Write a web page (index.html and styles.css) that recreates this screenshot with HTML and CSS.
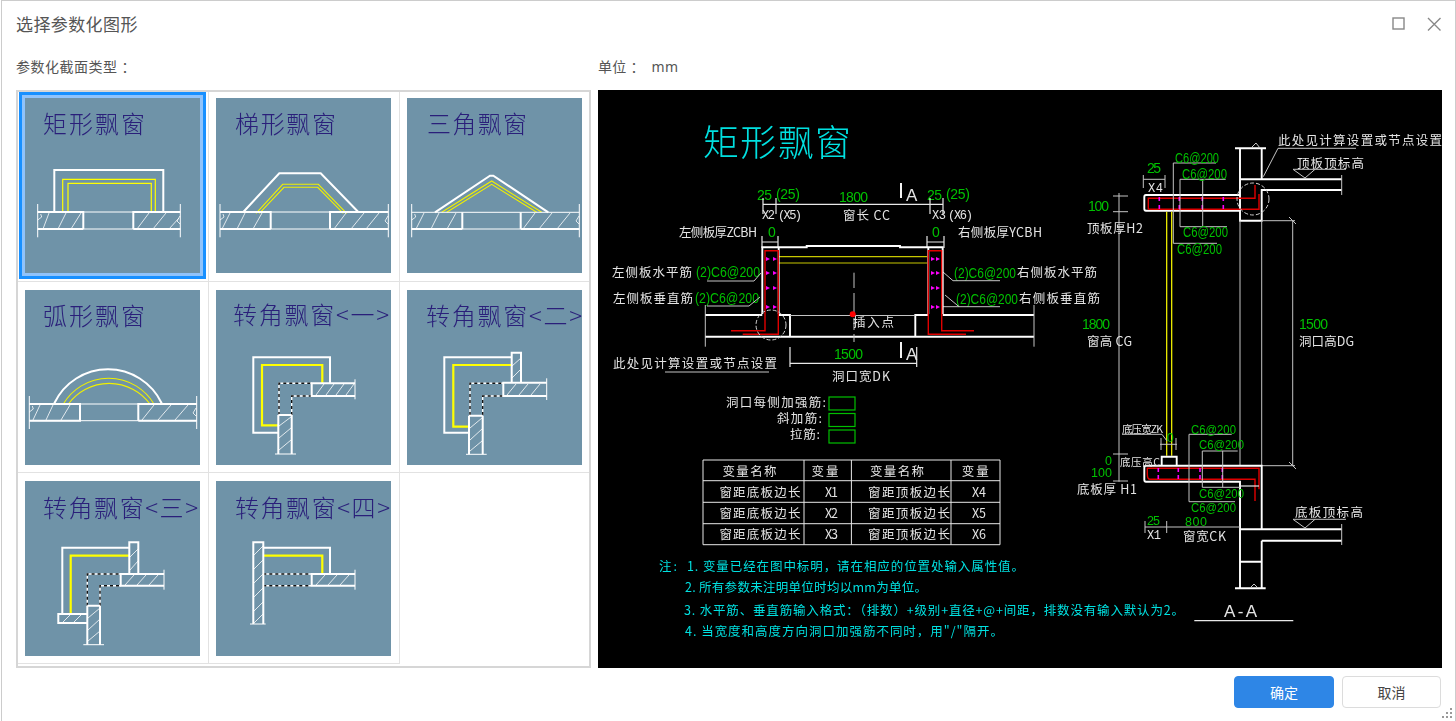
FILE: index.html
```html
<!DOCTYPE html>
<html lang="zh-CN">
<head>
<meta charset="utf-8">
<title>选择参数化图形</title>
<link rel="stylesheet" href="styles.css">
</head>
<body>
<div class="window">
  <header class="titlebar">
    <h1 class="title">选择参数化图形</h1>
    <div class="winbtns">
      <svg class="winicon" viewBox="0 0 14 14"><rect x="1" y="1" width="11" height="11"/></svg>
      <svg class="winicon" viewBox="0 0 14 14"><path d="M1 1L13.500 13.500M13.500 1L1 13.500"/></svg>
    </div>
  </header>
  <div class="labels">
    <div class="label-left">参数化截面类型<span class="colon">：</span></div>
    <div class="label-right">单位<span class="colon">：</span><span class="unit">mm</span></div>
  </div>
  <div class="panes">
    <div class="gallery">
      <div class="cell first">
        <div class="thumb selected"><svg viewBox="0 0 175 175">
          <text class="tt" x="18" y="35" textLength="102">矩形飘窗</text>
          <path class="w" d="M29.300 114V72H138.300V114"/>
          <path class="yl" d="M37.700 114V81.300H130.300V114M43 114V85.300H126.300V114"/>
          <path class="t" d="M12.700 114H155.300M12.700 131H155.300M12.700 106V139.300M155.300 106V139.300"/>
          <path class="w" d="M12.700 114H58.300V131M108.300 131V114H155.300M12.700 131H58.300M108.300 131H155.300"/>
          <path class="h" d="M12.700 122l4-3-1-3M18 131l6-16M33 131l8-16M46 131l10-16M112 131l12-16M128 131l13-16M144 131l10-11M155 118l-3 5 3 3"/>
        </svg></div>
      </div>
      <div class="cell">
        <div class="thumb"><svg viewBox="0 0 175 175">
          <text class="tt" x="19" y="35" textLength="101">梯形飘窗</text>
          <path class="w" d="M27.300 114L63.300 75.300H104.700L142.300 114"/>
          <path class="yt" d="M40 115.300L66.700 86.300H102.300L130.700 115.300M43.300 115.300L68 89.300H101.700L127.300 115.300"/>
          <path class="t" d="M4 114H172.300M4 131H172.300M4 106V139.300M172.300 106V139.300"/>
          <path class="w" d="M4 114H54.700V131M114 131V114H172.300M4 131H54.700M114 131H172.300"/>
          <path class="h" d="M4 122l4-3-1-3M6 131l8-16M21 131l8-16M37 131l9-16M118 131l12-16M135 131l13-16M150 131l13-16M172 118l-3 5 3 3"/>
        </svg></div>
      </div>
      <div class="cell last">
        <div class="thumb"><svg viewBox="0 0 175 175">
          <text class="tt" x="20" y="35" textLength="100">三角飘窗</text>
          <path class="w" d="M28 114.300L83 77.700H86.300L141.300 114.300"/>
          <path class="yt" d="M34.700 114.300L84.700 83L134.700 114.300M39.700 114.300L84.700 86.300L129.700 114.300"/>
          <path class="t" d="M4.700 114.300H172.300M4.700 131H172.300M4.700 106V139.300M172.300 106V139.300"/>
          <path class="w" d="M55.300 114.300V131M113.700 114.300V131M4.700 131H55.300M113.700 131H172.300"/>
          <path class="h" d="M4.700 122l4-3-1-3M9 131l8-16M24 131l8-16M40 131l9-16M116 131l12-16M132 131l13-16M150 131l13-16M172 118l-3 5 3 3"/>
        </svg></div>
      </div>
      <div class="cell">
        <div class="thumb"><svg viewBox="0 0 175 175">
          <text class="tt" x="18" y="35" textLength="102">弧形飘窗</text>
          <path class="w" d="M29.300 113.300A59.400 59.400 0 0 1 136.700 113.300"/>
          <path class="yt" d="M38.300 114A52.800 52.800 0 0 1 129 114M43.300 114A50.700 50.700 0 0 1 125 114"/>
          <path class="t" d="M4.300 114H171.700M4.300 130.700H171.700M4.300 106V139M171.700 106V139"/>
          <path class="w" d="M4.300 114H55V130.700H4.300M113.300 130.700V114H171.700M113.300 130.700H171.700"/>
          <path class="h" d="M4.300 122l4-3-1-3M8 130l7-15M21 130l7-15M36 130l9-15M117 130l12-15M133 130l13-15M150 130l13-15M171 118l-3 5 3 3"/>
        </svg></div>
      </div>
      <div class="cell">
        <div class="thumb"><svg viewBox="0 0 175 175">
          <text class="tt" x="17" y="34" textLength="156">转角飘窗&lt;一&gt;</text>
          <path class="w" d="M62.300 142.700H37.300V67.300H114V93.300"/>
          <path class="yb" d="M62.300 135.300H46V75H106.300V93.300"/>
          <path class="dw" d="M63 125V93.300H95.700M75.700 125V106H95.700"/>
          <path class="d" d="M63 125V93.300H95.700M75.700 125V106H95.700"/>
          <path class="w" d="M139 93.300H95.700V106H139M62.300 125H75.700M62.300 125V164M75.700 125V164"/>
          <path class="t" d="M139 89.300V109.300M59 164H80"/>
          <path class="h" d="M100 105l8-11M110 105l8-11M120 105l8-11M130 105l8-11M63 136l12-9M63 148l12-10M63 160l12-10"/>
        </svg></div>
      </div>
      <div class="cell last">
        <div class="thumb"><svg viewBox="0 0 175 175">
          <text class="tt" x="19" y="35" textLength="156">转角飘窗&lt;二&gt;</text>
          <path class="w" d="M61.300 142.700H37.300V67.300H104.700"/>
          <path class="yb" d="M62 136.700H46.300V75H104.700"/>
          <path class="dw" d="M63 125V93.300H96.300M75.700 125V106H96.300"/>
          <path class="d" d="M63 125V93.300H96.300M75.700 125V106H96.300"/>
          <path class="w" d="M104.700 92.700V62.700H114V92.700M139.700 92.700H96.300V106H139.700M62 125.700H75.700M62 125.700V164.300M75.700 125.700V164.300"/>
          <path class="t" d="M139.700 88.300V110M59 164.300H79.700"/>
          <path class="h" d="M105 76l9-8M105 88l9-9M100 105l9-11M112 105l9-11M124 105l9-11M63 138l12-10M63 150l12-11M63 161l12-10"/>
        </svg></div>
      </div>
      <div class="cell">
        <div class="thumb"><svg viewBox="0 0 175 175">
          <text class="tt" x="18" y="36" textLength="155">转角飘窗&lt;三&gt;</text>
          <path class="w" d="M37.300 133V66.700H104.300"/>
          <path class="yb" d="M45.700 133V74.700H104.300"/>
          <path class="dw" d="M62.300 124.700V93H95.700M75 124.700V104.700H95.700"/>
          <path class="d" d="M62.300 124.700V93H95.700M75 124.700V104.700H95.700"/>
          <path class="w" d="M104.300 92V61.300H113.300V92M139 93H95.700V104.700H139M62.300 124.700H75M62.300 124.700V163.700M75 124.700V163.700M62.300 133H33.300V142H62.300"/>
          <path class="t" d="M139 88.700V108.700M58.300 163.700H79"/>
          <path class="h" d="M105 76l8-8M105 89l8-9M100 104l9-10M112 104l9-10M124 104l9-10M38 141l7-7M49 141l7-7M63 137l12-10M63 149l12-11M63 160l12-10"/>
        </svg></div>
      </div>
      <div class="cell">
        <div class="thumb"><svg viewBox="0 0 175 175">
          <text class="tt" x="19" y="36" textLength="155">转角飘窗&lt;四&gt;</text>
          <path class="w" d="M47.300 66.700H114V92"/>
          <path class="yb" d="M47.300 74.700H106.300V92"/>
          <path class="dw" d="M47.300 93H95.700M47.300 104.700H95.700"/>
          <path class="d" d="M47.300 93H95.700M47.300 104.700H95.700"/>
          <path class="w" d="M37.300 143V61.300H47.300V143M139 93H95.700V104.700H139"/>
          <path class="t" d="M139 88.700V108.700M34 143H49.700"/>
          <path class="h" d="M38 74l9-9M38 88l9-9M38 102l9-9M38 116l9-9M38 130l9-9M38 142l9-9M100 104l9-10M112 104l9-10M124 104l9-10"/>
        </svg></div>
      </div>
      <div class="cell empty"></div>
    </div>
    <div class="drawing">
      <svg viewBox="598 90 844 578">
        <text class="cy big" x="703" y="156" textLength="148">矩形飘窗</text>

        <!-- plan: dimensions -->
        <text class="gr" x="757" y="200" textLength="15">25</text>
        <text class="gr" x="776" y="199" textLength="24">(25)</text>
        <text class="gr" x="839" y="202" textLength="29">1800</text>
        <text class="gr" x="927" y="200" textLength="15">25</text>
        <text class="gr" x="946" y="199" textLength="24">(25)</text>
        <text class="wt sm" x="762" y="219" textLength="13">X2</text>
        <text class="wt sm" x="778" y="219" textLength="24">(X5)</text>
        <text class="wt" x="843" y="220" textLength="47">窗长 CC</text>
        <text class="wt sm" x="932" y="219" textLength="14">X3</text>
        <text class="wt sm" x="948" y="219" textLength="25">(X6)</text>
        <text class="wt" x="679" y="237" textLength="78">左侧板厚ZCBH</text>
        <text class="gr" x="768" y="237" textLength="7">0</text>
        <text class="gr" x="932" y="237" textLength="7">0</text>
        <text class="wt" x="958" y="237" textLength="84">右侧板厚YCBH</text>
        <path class="l1" d="M763 204.300H943M763 198V214M776 198V214M930 198V214M943 198V214M762 242H778M762 236V248M778 236V248M927 242H944M927 236V248M944 236V248"/>
        <path class="l2" d="M901 183V198M901 342V358"/>
        <text class="wt cap" x="906" y="201" textLength="12">A</text>
        <text class="wt cap" x="906" y="360" textLength="12">A</text>

        <!-- plan: labels -->
        <text class="wt" x="612" y="277" textLength="80">左侧板水平筋</text>
        <text class="gr" x="696" y="277" textLength="64" lengthAdjust="spacingAndGlyphs">(2)C6@200</text>
        <text class="wt" x="613" y="303" textLength="80">左侧板垂直筋</text>
        <text class="gr" x="695" y="303" textLength="64" lengthAdjust="spacingAndGlyphs">(2)C6@200</text>
        <text class="gr" x="954" y="278" textLength="62" lengthAdjust="spacingAndGlyphs">(2)C6@200</text>
        <text class="wt" x="1017" y="277" textLength="80">右侧板水平筋</text>
        <text class="gr" x="956" y="304" textLength="62" lengthAdjust="spacingAndGlyphs">(2)C6@200</text>
        <text class="wt" x="1019" y="303" textLength="81">右侧板垂直筋</text>
        <path class="l0" d="M707 281H754L761 273M707 306H749L760 297M1000 280.700H953L943 272M1000 306.700H941M959 306.700L945 295"/>

        <!-- plan: walls -->
        <path class="y0" d="M779 256.700H927M779 263H927"/>
        <path class="l2" d="M762.300 314V247.300H806.700V246H900V247.300H942.700V314M778.700 247.300V314M928.300 247.300V314"/>
        <path class="l2" d="M705 315H762.300M778.700 315H790V336.700M915.300 336.700V315H928.300M942.700 315H1034M705 336.700H1034"/>
        <path class="l0" d="M790 315.500H915.300M705.300 305V346.700M1034 305V346.700M854 272.700V288M854 293V312M854 318V330M854 334V342"/>
        <path class="rd" d="M731 330.700H765V250.700H778.300V334.300H742.700M974 330.700H941.700V250.700H928.300V334.300H966"/>
        <path class="mg" d="M766 257l4 2-4 2zM773 257l4 2-4 2zM766 271l4 2-4 2zM773 271l4 2-4 2zM766 286l4 2-4 2zM773 286l4 2-4 2zM766 305l4 2-4 2zM773 305l4 2-4 2zM931 257l4 2-4 2zM936 257l4 2-4 2zM931 271l4 2-4 2zM936 271l4 2-4 2zM931 286l4 2-4 2zM936 286l4 2-4 2zM931 305l4 2-4 2zM936 305l4 2-4 2z"/>
        <circle class="dash" cx="771" cy="325" r="15"/>
        <circle class="dot" cx="852.700" cy="314.300" r="3"/>
        <text class="wt" x="853" y="327" textLength="41">插入点</text>
        <text class="gr" x="834" y="359" textLength="29">1500</text>
        <path class="l1" d="M790 363.300H916.700M790 347V367M916.700 347V367"/>
        <text class="wt" x="832" y="381" textLength="58">洞口宽DK</text>
        <text class="wt" x="613" y="368" textLength="164">此处见计算设置或节点设置</text>
        <path class="l0" d="M665 372H769"/>

        <!-- rebar legend -->
        <text class="wt" x="726" y="407" textLength="100">洞口每侧加强筋:</text>
        <text class="wt" x="777" y="423" textLength="45">斜加筋:</text>
        <text class="wt" x="790" y="439" textLength="30">拉筋:</text>
        <rect class="box" x="829" y="397" width="26" height="13"/>
        <rect class="box" x="829" y="413.500" width="26" height="13"/>
        <rect class="box" x="829" y="430" width="26" height="13"/>

        <!-- table -->
        <path class="tb" d="M703 460H1000M703 480.700H1000M703 502.300H1000M703 523.700H1000M703 544.700H1000M703 460V544.700M804 460V544.700M851.400 460V544.700M951 460V544.700M1000 460V544.700"/>
        <text class="wt" x="722.500" y="476" textLength="54">变量名称</text>
        <text class="wt" x="811.500" y="476" textLength="27">变量</text>
        <text class="wt" x="870" y="476" textLength="54">变量名称</text>
        <text class="wt" x="961.700" y="476" textLength="27">变量</text>
        <text class="wt" x="719.400" y="497" textLength="81">窗距底板边长</text>
        <text class="wt" x="825" y="497" textLength="13">X1</text>
        <text class="wt" x="868" y="497" textLength="82">窗距顶板边长</text>
        <text class="wt" x="972" y="497" textLength="14">X4</text>
        <text class="wt" x="719.400" y="518" textLength="81">窗距底板边长</text>
        <text class="wt" x="825" y="518" textLength="13">X2</text>
        <text class="wt" x="868" y="518" textLength="82">窗距顶板边长</text>
        <text class="wt" x="972" y="518" textLength="14">X5</text>
        <text class="wt" x="719.400" y="539" textLength="81">窗距底板边长</text>
        <text class="wt" x="825" y="539" textLength="13">X3</text>
        <text class="wt" x="868" y="539" textLength="82">窗距顶板边长</text>
        <text class="wt" x="972" y="539" textLength="14">X6</text>

        <!-- notes -->
        <text class="cy" x="659" y="571" textLength="18">注:</text>
        <text class="cy" x="687" y="571" textLength="337">1. 变量已经在图中标明，请在相应的位置处输入属性值。</text>
        <text class="cy" x="685" y="592" textLength="242">2. 所有参数未注明单位时均以mm为单位。</text>
        <text class="cy" x="684" y="615" textLength="500">3. 水平筋、垂直筋输入格式：（排数）+级别+直径+@+间距，排数没有输入默认为2。</text>
        <text class="cy" x="685" y="636" textLength="318">4. 当宽度和高度方向洞口加强筋不同时，用"/"隔开。</text>

        <!-- section: top -->
        <text class="wt" x="1278" y="145" textLength="164">此处见计算设置或节点设置</text>
        <path class="l0" d="M1356 148.300H1278L1263.300 176.700M1293 169.300H1346M1293 169.300L1305 178L1315 169.300"/>
        <text class="wt" x="1297" y="168" textLength="67">顶板顶标高</text>
        <path class="l2" d="M1235 148.300H1266M1240 148.300V220.700H1261.700V190H1341.700M1261.700 148.300V179.300H1341.700M1240 179.300H1261.700"/>
        <path class="l2" d="M1240 195H1146Q1144.300 195 1144.300 197V208.700Q1144.300 210.700 1146 210.700H1240"/>
        <path class="l0" d="M1341.700 175V195M1251 148L1256 143L1260 148"/>
        <path class="rd" d="M1148.300 209.300V198.300H1255V185M1148.300 209.300H1259V194"/>
        <path class="mg1" d="M1159.300 197V201M1159.300 205V209M1179.300 197V201M1179.300 205V209M1202.300 197V201M1202.300 205V209M1223.300 197V201M1223.300 205V209"/>
        <circle class="dash" cx="1253" cy="199" r="16"/>
        <path class="l0" d="M1216 163H1173.300V243.300H1217M1225.700 179.300H1180V226.700H1227M1202.700 179.300V226.700M1261.700 220.700H1295"/>
        <text class="gr" x="1175" y="163" textLength="44" lengthAdjust="spacingAndGlyphs">C6@200</text>
        <text class="gr" x="1182" y="179" textLength="45" lengthAdjust="spacingAndGlyphs">C6@200</text>
        <text class="gr" x="1183" y="237" textLength="45" lengthAdjust="spacingAndGlyphs">C6@200</text>
        <text class="gr" x="1177" y="254" textLength="45" lengthAdjust="spacingAndGlyphs">C6@200</text>
        <text class="gr" x="1147" y="173" textLength="14">25</text>
        <text class="wt sm" x="1148" y="192" textLength="15">X4</text>
        <path class="l0" d="M1143.300 175V188M1165 175V188M1143.300 179.300H1165M1113 196H1128M1113 211.700H1128M1119 193V481.700M1113 454H1128M1113 481H1128"/>
        <text class="gr" x="1088" y="211" textLength="21">100</text>
        <text class="wt" x="1087" y="233" textLength="56">顶板厚H2</text>
        <path class="y1" d="M1166.700 211.700V455.700M1171.700 211.700V455.700"/>
        <text class="gr" x="1082" y="329" textLength="28">1800</text>
        <text class="wt" x="1087" y="346" textLength="45">窗高 CG</text>
        <text class="gr" x="1299" y="329" textLength="29">1500</text>
        <text class="wt" x="1299" y="346" textLength="55">洞口高DG</text>
        <path class="l0" d="M1240 220.700V465.700M1261.700 220.700V465.700M1292.700 220.700V466M1261.700 465.700H1295M1289 217L1296 224M1289 462L1296 469"/>

        <!-- section: bottom -->
        <path class="l2" d="M1146 465.700H1261.700V529.300H1341.700M1146 465.700Q1144.300 465.700 1144.300 468V479.700Q1144.300 481.700 1146 481.700H1240V588.300M1261.700 540.700H1341.700M1261.700 540.700V588.300M1240 561.700H1261.700M1235 588.300H1265.700M1240 529.300H1261.700M1161.700 465.700V456.700H1176.700V465.700"/>
        <path class="l0" d="M1341.700 524V545M1250 588L1254 584L1258 588"/>
        <path class="rd" d="M1255 501V479.300H1150Q1147.300 479.300 1147.300 474V468.300H1259V489.300"/>
        <path class="l1" d="M1240 486H1259"/>
        <path class="mg1" d="M1158.300 468V472M1158.300 475V479M1178.300 468V472M1178.300 475V479M1200 468V472M1200 475V479M1222.300 468V472M1222.300 475V479"/>
        <path class="l0" d="M1231.700 434.300H1189V501.700H1235M1237.700 451H1202.300V487.300H1240M1222.700 451V487.300"/>
        <text class="gr tight" x="1191" y="434" textLength="45" lengthAdjust="spacingAndGlyphs">C6@200</text>
        <text class="gr tight" x="1199" y="449" textLength="45" lengthAdjust="spacingAndGlyphs">C6@200</text>
        <text class="gr tight" x="1199" y="498" textLength="45" lengthAdjust="spacingAndGlyphs">C6@200</text>
        <text class="gr tight" x="1191" y="512" textLength="45" lengthAdjust="spacingAndGlyphs">C6@200</text>
        <text class="wt xs" x="1122" y="433" textLength="41">底压宽ZK</text>
        <text class="gr tight" x="1166.700" y="442" textLength="6">0</text>
        <path class="l0" d="M1122 434.300H1162L1167 441M1160 444.300H1177M1161 438V450M1176 438V450"/>
        <text class="gr tight" x="1105" y="465" textLength="7">0</text>
        <text class="wt xs" x="1120" y="466" textLength="40">底压高C</text>
        <text class="gr tight" x="1091" y="477" textLength="21">100</text>
        <text class="wt" x="1077" y="494" textLength="60">底板厚 H1</text>
        <text class="gr tight" x="1147" y="525" textLength="13">25</text>
        <text class="gr tight" x="1185" y="526" textLength="22">800</text>
        <path class="l0" d="M1145 527H1240M1145 521V533M1166.700 521V533"/>
        <text class="wt sm" x="1147" y="539" textLength="14">X1</text>
        <text class="wt" x="1183" y="541" textLength="43">窗宽CK</text>
        <text class="wt" x="1295" y="517" textLength="68">底板顶标高</text>
        <path class="l0" d="M1293 519.300H1346M1293 519.300L1305 528L1315 519.300"/>
        <text class="wt cap" x="1224" y="617" textLength="33">A-A</text>
        <path class="l1" d="M1194.300 620.700H1293.300"/>
      </svg>
    </div>
  </div>
  <footer class="footer">
    <button class="btn primary" type="button">确定</button>
    <button class="btn" type="button">取消</button>
  </footer>
  <svg class="grip" viewBox="0 0 10 10"><path d="M8 0h2v2H8zM4 4h2v2H4zM8 4h2v2H8zM0 8h2v2H0zM4 8h2v2H4zM8 8h2v2H8z"/></svg>
</div>
</body>
</html>
```

FILE: styles.css
```css
* { box-sizing: border-box; }
html, body { margin: 0; padding: 0; height: 721px; overflow: hidden; background: #fff; }
body { font-family: "Noto Sans CJK SC", "Liberation Sans", sans-serif; color: #555; }

.window {
  position: relative;
  margin-left: 1px;
  height: 721px;
  border-top: 1px solid #ccc;
  border-left: 1px solid #ccc;
  border-right: 1px solid #ccc;
  display: flex;
  flex-direction: column;
}

.titlebar {
  height: 50px;
  padding: 0 14px;
  display: flex;
  align-items: center;
  justify-content: space-between;
}
.title { margin: 0 0 5px; font-size: 17px; font-weight: 400; letter-spacing: .4px; color: #555; }
.winbtns { display: flex; gap: 21px; margin-bottom: 4px; }
.winicon { width: 14px; height: 14px; fill: none; stroke: #888; stroke-width: 1.4; }

.labels { height: 39px; padding: 5px 14px 0; display: flex; align-items: flex-start; font-size: 14px; line-height: 20px; }
.label-left { width: 582px; letter-spacing: .5px; }
.label-right { letter-spacing: .2px; }
.colon { margin-left: 4px; }
.unit { margin-left: 7px; font-family: "Noto Sans", "Liberation Sans", sans-serif; }

.panes { display: flex; gap: 7px; padding-left: 14px; height: 578px; }

.gallery {
  width: 575px;
  height: 578px;
  border: 2px solid #d6d6d6;
  display: grid;
  grid-template-columns: 191px 191px 189px;
  grid-template-rows: 190px 191px 191px;
  background: #fff;
}
.cell { padding: 8px 0 0 7px; border-right: 1px solid #e2e2e2; border-bottom: 1px solid #e2e2e2; }
.cell.first { padding-top: 6px; }
.gallery .cell:nth-child(2), .gallery .cell:nth-child(3) { padding-top: 6px; }
.cell.last { border-right: 0; }
.cell.empty { border: 0; }

.thumb { width: 175px; height: 175px; background: #6f93a8; }
.thumb.selected { box-shadow: 0 0 0 3px #8fc3fb, 0 0 0 6px #1890ff; }
.thumb svg { display: block; width: 175px; height: 175px; fill: none; filter: blur(.25px); }

.tt { font-family: "Noto Sans CJK SC", sans-serif; font-size: 24px; font-weight: 300; fill: #2a1f7a; stroke: none; }
.w { stroke: #fff; stroke-width: 2; }
.t { stroke: #fff; stroke-width: 1; }
.h { stroke: #fff; stroke-width: .8; }
.yl { stroke: #ffff00; stroke-width: 1.2; }
.yt { stroke: #f0f000; stroke-width: 1.1; }
.yb { stroke: #ffff00; stroke-width: 2.2; }
.dw { stroke: #fff; stroke-width: 1.4; }
.d { stroke: #111; stroke-width: 1.4; stroke-dasharray: 3 3; }

.drawing { width: 844px; height: 578px; background: #000; }
.drawing svg { display: block; width: 844px; height: 578px; fill: none; filter: blur(.3px); }
.drawing text { stroke: none; font-family: "Noto Sans CJK SC", "Liberation Sans", sans-serif; font-size: 12.500px; }
.drawing .wt { fill: #e4e4e4; }
.drawing .gr { fill: #00c000; font-family: "Liberation Sans", sans-serif; font-size: 14px; }
.drawing .gr.tight { font-size: 12.500px; }
.drawing .cy { fill: #00e0e0; }
.drawing .big { font-size: 36px; font-weight: 300; }
.drawing .sm { font-family: "Liberation Mono", monospace; font-size: 12px; }
.drawing .xs { font-size: 10.500px; }
.drawing .cap { font-family: "Liberation Sans", sans-serif; font-size: 17px; }

.l0 { stroke: #c4c4c4; stroke-width: 1; }
.l1 { stroke: #e8e8e8; stroke-width: 1.2; }
.l2 { stroke: #fff; stroke-width: 1.9; }
.rd { stroke: #e00000; stroke-width: 1.4; }
.y0 { stroke: #c8c800; stroke-width: 1.2; }
.y1 { stroke: #ffff00; stroke-width: 1.2; }
.mg { fill: #ff00ff; }
.mg1 { stroke: #ff00ff; stroke-width: 1.6; }
.dash { stroke: #d0d0d0; stroke-width: 1; stroke-dasharray: 4 2; }
.dot { fill: #ff0000; }
.box { stroke: #00c000; stroke-width: 1.2; }
.tb { stroke: #e8e8e8; stroke-width: 1; }

.footer { display: flex; justify-content: flex-end; gap: 8px; padding: 8px 14px 0 0; }
.btn {
  width: 99px;
  height: 32px;
  padding: 0;
  border: 1.500px solid #dcdcdc;
  border-radius: 4px;
  background: #fff;
  color: #444;
  font-family: "Noto Sans CJK SC", sans-serif;
  font-size: 14px;
}
.btn.primary { width: 100px; border-color: #2e86e6; background: #2e86e6; color: #fff; }

.grip { position: absolute; right: 3px; bottom: 3px; width: 10px; height: 10px; fill: #999; }
```
